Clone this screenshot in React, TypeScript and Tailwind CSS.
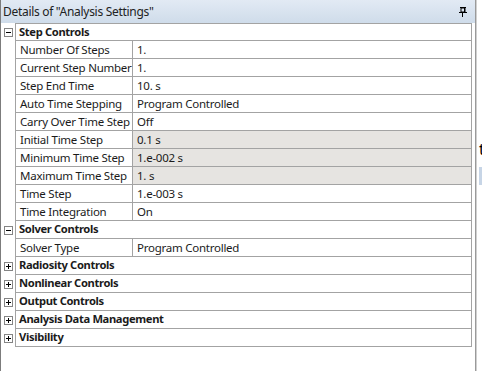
import React from "react";

type Row =
  | { kind: "cat"; label: string; open: boolean }
  | { kind: "prop"; name: string; value: string; shaded?: boolean };

const rows: Row[] = [
  { kind: "cat", label: "Step Controls", open: true },
  { kind: "prop", name: "Number Of Steps", value: "1." },
  { kind: "prop", name: "Current Step Number", value: "1." },
  { kind: "prop", name: "Step End Time", value: "10. s" },
  { kind: "prop", name: "Auto Time Stepping", value: "Program Controlled" },
  { kind: "prop", name: "Carry Over Time Step", value: "Off" },
  { kind: "prop", name: "Initial Time Step", value: "0.1 s", shaded: true },
  { kind: "prop", name: "Minimum Time Step", value: "1.e-002 s", shaded: true },
  { kind: "prop", name: "Maximum Time Step", value: "1. s", shaded: true },
  { kind: "prop", name: "Time Step", value: "1.e-003 s" },
  { kind: "prop", name: "Time Integration", value: "On" },
  { kind: "cat", label: "Solver Controls", open: true },
  { kind: "prop", name: "Solver Type", value: "Program Controlled" },
  { kind: "cat", label: "Radiosity Controls", open: false },
  { kind: "cat", label: "Nonlinear Controls", open: false },
  { kind: "cat", label: "Output Controls", open: false },
  { kind: "cat", label: "Analysis Data Management", open: false },
  { kind: "cat", label: "Visibility", open: false },
];

function Toggle({ open }: { open: boolean }) {
  return (
    <svg width="9" height="9" viewBox="0 0 9 9">
      <rect x="0.5" y="0.5" width="8" height="8" fill="#fff" stroke="#848484" />
      <line x1="2" y1="4.5" x2="7" y2="4.5" stroke="#000" />
      {!open && <line x1="4.5" y1="2" x2="4.5" y2="7" stroke="#000" />}
    </svg>
  );
}

function Pin() {
  return (
    <svg width="8" height="10" viewBox="0 0 8 10">
      <rect x="1" y="0" width="6" height="1" fill="#000" />
      <rect x="2" y="1" width="4" height="4" fill="none" stroke="#000" strokeWidth="1" />
      <rect x="5" y="1" width="1" height="4" fill="#000" />
      <rect x="0" y="5" width="8" height="1" fill="#000" />
      <rect x="3" y="6" width="1" height="4" fill="#000" />
    </svg>
  );
}

export default function App() {
  return (
    <div
      className="w-[482px] h-[371px] flex bg-white overflow-hidden text-[11.5px] tracking-[-0.25px] text-[#1b1b1b]"
      style={{ fontFamily: '"Noto Sans", "Open Sans", sans-serif' }}
    >
      <div className="w-[476px] h-full flex flex-col border-l border-[#7c7c7c] border-r border-r-[#9a9a9a]">
        <div className="h-[23px] flex items-center justify-between pl-[2px] pr-[8px] bg-gradient-to-b from-[#e2eaf4] to-[#cfdcea]">
          <span className="leading-none text-[12px] tracking-[-0.3px] text-[#222]">Details of "Analysis Settings"</span>
          <Pin />
        </div>
        <div className="flex flex-col pr-[3px] bg-white">
          {rows.map((r, i) => (
            <div key={i} className="flex h-[18px]">
              <div className="w-[14px] flex items-center justify-center border-t border-transparent">
                {r.kind === "cat" && <Toggle open={r.open} />}
              </div>
              <div
                className={`flex-1 flex border-l border-r border-b border-[#a3a3a3] ${
                  i === 0 ? "border-t" : ""
                }`}
              >
                {r.kind === "cat" ? (
                  <div className="flex items-center pl-[3px] font-bold text-[11.2px] tracking-[-0.35px]">
                    {r.label}
                  </div>
                ) : (
                  <>
                    <div className="w-[117px] flex items-center pl-[4px] border-r border-[#a3a3a3] whitespace-nowrap overflow-hidden">
                      {r.name}
                    </div>
                    <div
                      className={`flex-1 flex items-center pl-[4px] whitespace-nowrap ${
                        r.shaded ? "bg-[#e6e4e1]" : ""
                      }`}
                    >
                      {r.value}
                    </div>
                  </>
                )}
              </div>
            </div>
          ))}
        </div>
      </div>
      <div className="flex-1 relative border-l border-[#d0d0d0] bg-white overflow-hidden">
        <span className="absolute left-[2px] top-[141px] text-[16px] leading-none text-black">t</span>
        <div className="absolute left-[2px] top-[167px] w-[6px] h-[18px] bg-[#c7d5e6]" />
      </div>
    </div>
  );
}
